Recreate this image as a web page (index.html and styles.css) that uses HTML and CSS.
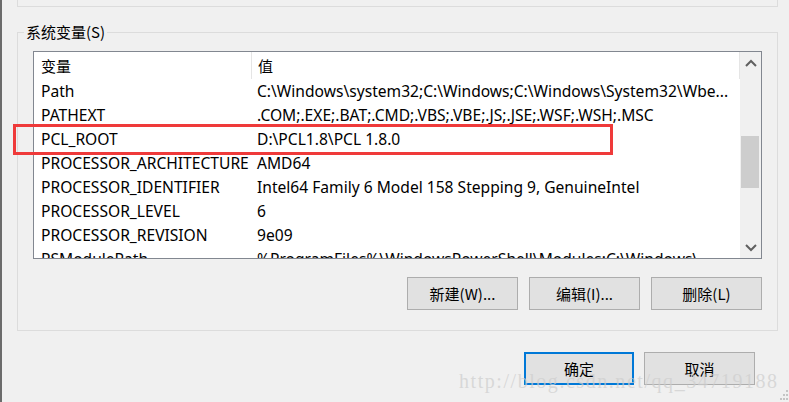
FILE: index.html
```html
<!DOCTYPE html>
<html>
<head>
<meta charset="utf-8">
<link rel="stylesheet" href="styles.css">
</head>
<body>
<div class="window">
  <div class="top-panel"></div>
  <div class="group">
    <div class="group-title">系统变量(S)</div>
    <div class="listbox">
      <div class="list">
        <div class="row header">
          <div class="col name">变量</div>
          <div class="col value">值</div>
        </div>
        <div class="row"><div class="col name">Path</div><div class="col value">C:\Windows\system32;C:\Windows;C:\Windows\System32\Wbe...</div></div>
        <div class="row"><div class="col name">PATHEXT</div><div class="col value">.COM;.EXE;.BAT;.CMD;.VBS;.VBE;.JS;.JSE;.WSF;.WSH;.MSC</div></div>
        <div class="row"><div class="col name">PCL_ROOT</div><div class="col value">D:\PCL1.8\PCL 1.8.0</div></div>
        <div class="row"><div class="col name">PROCESSOR_ARCHITECTURE</div><div class="col value">AMD64</div></div>
        <div class="row"><div class="col name">PROCESSOR_IDENTIFIER</div><div class="col value">Intel64 Family 6 Model 158 Stepping 9, GenuineIntel</div></div>
        <div class="row"><div class="col name">PROCESSOR_LEVEL</div><div class="col value">6</div></div>
        <div class="row"><div class="col name">PROCESSOR_REVISION</div><div class="col value">9e09</div></div>
        <div class="row"><div class="col name">PSModulePath</div><div class="col value">%ProgramFiles%\WindowsPowerShell\Modules;C:\Windows\...</div></div>
      </div>
      <div class="scrollbar">
        <div class="arrow">
          <svg width="12" height="8" viewBox="0 0 12 8"><path d="M1 7 L6 2 L11 7" fill="none" stroke="#606060" stroke-width="2"/></svg>
        </div>
        <div class="track">
          <div class="thumb"></div>
        </div>
        <div class="arrow">
          <svg width="12" height="8" viewBox="0 0 12 8"><path d="M1 1 L6 6 L11 1" fill="none" stroke="#606060" stroke-width="2"/></svg>
        </div>
      </div>
    </div>
    <div class="group-buttons">
      <button class="btn">新建(W)...</button>
      <button class="btn">编辑(I)...</button>
      <button class="btn">删除(L)</button>
    </div>
    <div class="highlight"></div>
  </div>
  <div class="footer">
    <button class="btn btn-ok">确定</button>
    <button class="btn">取消</button>
  </div>
  <div class="watermark">http://blog.csdn.net/qq_34719188</div>
  <svg class="grip" width="10" height="12" viewBox="0 0 10 12">
    <rect x="7" y="0" width="2" height="2" fill="#c4c4c4"/>
    <rect x="4" y="4" width="2" height="2" fill="#c4c4c4"/>
    <rect x="7" y="4" width="2" height="2" fill="#c4c4c4"/>
    <rect x="1" y="8" width="2" height="2" fill="#c4c4c4"/>
    <rect x="4" y="8" width="2" height="2" fill="#c4c4c4"/>
    <rect x="7" y="8" width="2" height="2" fill="#c4c4c4"/>
  </svg>
</div>
</body>
</html>
```
FILE: styles.css
```css
html, body {
  margin: 0;
  padding: 0;
  background: #f0f0f0;
}
body {
  font-family: "Noto Sans", "Noto Sans CJK SC", sans-serif;
  font-size: 15.6px;
  color: #000;
  overflow: hidden;
}
.window {
  position: relative;
  width: 789px;
  height: 402px;
  box-sizing: border-box;
  border-left: 2px solid #6b6b6b;
  padding-left: 15px;
  overflow: hidden;
}
.top-panel {
  width: 761px;
  height: 7px;
  box-sizing: border-box;
  border-left: 1px solid #dcdcdc;
  border-right: 1px solid #dcdcdc;
  border-bottom: 1px solid #dcdcdc;
}
.group {
  position: relative;
  margin-top: 25px;
  width: 761px;
  height: 299px;
  box-sizing: border-box;
  border: 1px solid #dcdcdc;
  padding: 18px 15px 0 15px;
}
.group-title {
  position: absolute;
  left: 6px;
  top: -12px;
  padding: 0 2px;
  background: #f0f0f0;
  line-height: 22px;
  font-size: 15px;
  font-family: "Noto Sans CJK SC", sans-serif;
}
.listbox {
  display: flex;
  width: 729px;
  height: 208px;
  box-sizing: border-box;
  border: 1px solid #828790;
  background: #fff;
}
.list {
  flex: 1;
  overflow: hidden;
}
.row {
  display: flex;
  height: 24px;
  line-height: 24px;
  white-space: nowrap;
}
.row.header {
  height: 27px;
  line-height: 27px;
}
.col.name {
  width: 210px;
  padding-left: 7px;
  flex: none;
}
.col.value {
  padding-left: 6px;
  flex: 1;
  overflow: hidden;
}
.header .col {
  font-family: "Noto Sans CJK SC", sans-serif;
  font-size: 15px;
}
.header .col.name {
  border-right: 1px solid #e5e5e5;
}
.header .col.value {
  border-right: 1px solid #e5e5e5;
}
.highlight {
  position: absolute;
  left: -5px;
  top: 91px;
  width: 600px;
  height: 31px;
  box-sizing: border-box;
  border: 3px solid #ef3a3a;
}
.scrollbar {
  width: 21px;
  flex: none;
  display: flex;
  flex-direction: column;
  background: #f0f0f0;
}
.arrow {
  height: 21px;
  display: flex;
  align-items: center;
  justify-content: center;
  flex: none;
}
.track {
  flex: 1;
  padding-top: 63px;
}
.thumb {
  margin-left: 1px;
  width: 18px;
  height: 52px;
  background: #cdcdcd;
}
.group-buttons {
  display: flex;
  justify-content: flex-end;
  gap: 11px;
  margin-top: 18px;
}
.btn {
  width: 111px;
  height: 33px;
  box-sizing: border-box;
  border: 1px solid #adadad;
  background: #e1e1e1;
  font-family: "Noto Sans CJK SC", sans-serif;
  font-size: 15px;
  color: #000;
  padding: 0;
}
.footer {
  display: flex;
  justify-content: flex-end;
  gap: 10px;
  margin-top: 21px;
  margin-right: 34px;
}
.btn-ok {
  width: 110px;
  border: 2px solid #0078d7;
}
.watermark {
  position: absolute;
  left: 457px;
  top: 370px;
  font-family: "Liberation Serif", serif;
  font-size: 20px;
  color: rgba(205, 205, 205, 0.7);
  white-space: nowrap;
  letter-spacing: 1.55px;
}
.grip {
  position: absolute;
  right: 0;
  bottom: 0;
}
```
